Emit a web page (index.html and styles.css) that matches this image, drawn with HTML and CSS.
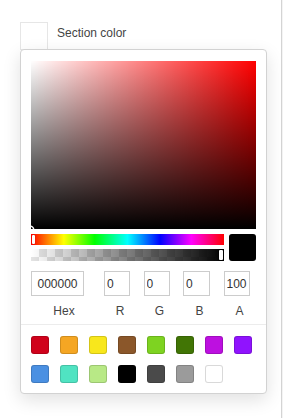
FILE: index.html
```html
<!DOCTYPE html>
<html lang="en">
<head>
  <meta charset="UTF-8">
  <title>Section color</title>
  <link rel="stylesheet" href="styles.css">
</head>
<body>
  <div class="page">
    <div class="field">
      <div class="swatch-toggle"></div>
      <div class="field-label">Section color</div>
    </div>

    <div class="picker">
      <div class="saturation">
        <div class="sat-white"></div>
        <div class="sat-black"></div>
        <div class="sat-pointer"></div>
      </div>

      <div class="sliders">
        <div class="bars">
          <div class="hue">
            <div class="hue-thumb"></div>
          </div>
          <div class="alpha">
            <div class="alpha-fill"></div>
            <div class="alpha-thumb"></div>
          </div>
        </div>
        <div class="preview"></div>
      </div>

      <div class="fields">
        <div class="col col-hex">
          <input class="inp" value="000000">
          <span class="lbl">Hex</span>
        </div>
        <div class="col col-r">
          <input class="inp" value="0">
          <span class="lbl">R</span>
        </div>
        <div class="col">
          <input class="inp" value="0">
          <span class="lbl">G</span>
        </div>
        <div class="col col-b">
          <input class="inp" value="0">
          <span class="lbl">B</span>
        </div>
        <div class="col">
          <input class="inp" value="100">
          <span class="lbl">A</span>
        </div>
      </div>

      <div class="presets">
        <div class="preset" style="background:#d0021b"></div>
        <div class="preset" style="background:#f5a623"></div>
        <div class="preset" style="background:#f8e71c"></div>
        <div class="preset" style="background:#8b572a"></div>
        <div class="preset" style="background:#7ed321"></div>
        <div class="preset" style="background:#417505"></div>
        <div class="preset" style="background:#bd10e0"></div>
        <div class="preset" style="background:#9013fe"></div>
        <div class="preset" style="background:#4a90e2"></div>
        <div class="preset" style="background:#50e3c2"></div>
        <div class="preset" style="background:#b8e986"></div>
        <div class="preset" style="background:#000000"></div>
        <div class="preset" style="background:#4a4a4a"></div>
        <div class="preset" style="background:#9b9b9b"></div>
        <div class="preset" style="background:#ffffff"></div>
      </div>
    </div>
  </div>
</body>
</html>
```

FILE: styles.css
```css
html, body {
  margin: 0;
  padding: 0;
}
body {
  background-color: #f4f4f4;
  font-family: "Liberation Sans", Arial, sans-serif;
  font-size: 12px;
  color: #333;
}
.page {
  width: 282px;
  min-height: 100vh;
  background-color: #fff;
  border-right: 1px solid #d4d4d4;
  box-sizing: border-box;
  padding: 22px 0 0 20px;
}
.field {
  display: flex;
  align-items: flex-start;
  gap: 9px;
}
.swatch-toggle {
  width: 28px;
  height: 28px;
  box-sizing: border-box;
  border: 1px solid #e6e6e6;
  background-color: #fff;
}
.field-label {
  margin-top: 4px;
  line-height: 14px;
  color: #444;
}
.picker {
  position: relative;
  width: 247px;
  margin-top: -1px;
  box-sizing: border-box;
  padding: 11px 10px 10px 10px;
  background-color: #fff;
  border: 1px solid #d2d2d2;
  border-radius: 4px;
  box-shadow: 0 6px 18px rgba(0, 0, 0, 0.12);
}
.saturation {
  position: relative;
  height: 168px;
  background-color: #ff0000;
  overflow: hidden;
}
.sat-white {
  position: absolute;
  inset: 0;
  background: linear-gradient(to right, #fff, rgba(255, 255, 255, 0));
}
.sat-black {
  position: absolute;
  inset: 0;
  background: linear-gradient(to top, #000, rgba(0, 0, 0, 0));
}
.sat-pointer {
  position: absolute;
  left: -4px;
  bottom: -4px;
  width: 6px;
  height: 6px;
  border-radius: 50%;
  box-shadow: 0 0 0 1.5px #fff, inset 0 0 1px 1px rgba(0, 0, 0, 0.3);
}
.sliders {
  display: flex;
  gap: 5px;
  margin-top: 5px;
}
.bars {
  flex: 1;
  display: flex;
  flex-direction: column;
  gap: 4px;
}
.hue {
  position: relative;
  height: 11px;
  background: linear-gradient(to right, #f00 0%, #ff0 17%, #0f0 33%, #0ff 50%, #00f 67%, #f0f 83%, #f00 100%);
}
.hue-thumb {
  position: absolute;
  left: 1px;
  top: 1px;
  width: 3px;
  height: 9px;
  background-color: #fff;
  border-radius: 1px;
  box-shadow: 0 0 1px rgba(0, 0, 0, 0.5);
}
.alpha {
  position: relative;
  height: 12px;
  background-color: #fff;
  background-image:
    linear-gradient(45deg, #e4e4e4 25%, transparent 25%, transparent 75%, #e4e4e4 75%),
    linear-gradient(45deg, #e4e4e4 25%, transparent 25%, transparent 75%, #e4e4e4 75%);
  background-size: 16px 16px;
  background-position: 0 0, 8px 8px;
}
.alpha-fill {
  position: absolute;
  inset: 0;
  background: linear-gradient(to right, rgba(0, 0, 0, 0), #000);
}
.alpha-thumb {
  position: absolute;
  right: 1px;
  top: 1px;
  width: 4px;
  height: 10px;
  background-color: #fff;
  border-radius: 1px;
  box-shadow: 0 0 0 1px rgba(0, 0, 0, 0.6);
}
.preview {
  width: 27px;
  height: 27px;
  border-radius: 3px;
  background-color: #000;
  box-shadow: inset 0 0 0 1px rgba(0, 0, 0, 0.15);
}
.fields {
  display: flex;
  margin-top: 10px;
}
.col {
  display: flex;
  flex-direction: column;
  width: 26px;
  margin-left: 13.5px;
}
.col-hex {
  width: 53px;
  margin-left: 0;
}
.col-r {
  margin-left: 20px;
}
.col-b {
  width: 27px;
}
.inp {
  width: 100%;
  height: 25px;
  box-sizing: border-box;
  margin: 0;
  padding: 0 0 0 2px;
  border: 1px solid #cccccc;
  border-radius: 0;
  font-family: "Liberation Sans", Arial, sans-serif;
  font-size: 12px;
  color: #333;
  background-color: #fff;
  outline: none;
}
.col-hex .inp {
  padding: 0;
  text-align: center;
}
.lbl {
  padding-top: 8px;
  padding-left: 6px;
  line-height: 14px;
  text-align: center;
  color: #444;
}
.col-hex .lbl {
  padding-left: 13px;
}
.presets {
  display: flex;
  flex-wrap: wrap;
  gap: 11px;
  margin: 6px -10px 0 -10px;
  padding: 11px 10px 0 10px;
  border-top: 1px solid #ececec;
}
.preset {
  width: 18px;
  height: 18px;
  border-radius: 3px;
  box-shadow: inset 0 0 0 1px rgba(0, 0, 0, 0.15);
}
```
